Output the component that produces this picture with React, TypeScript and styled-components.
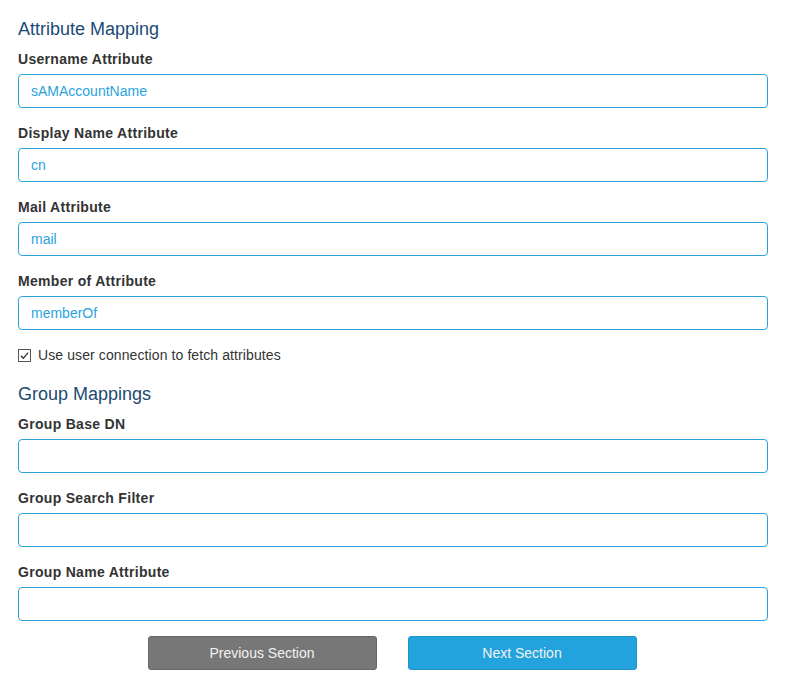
import React from 'react';
import styled, { createGlobalStyle } from 'styled-components';

const GlobalStyle = createGlobalStyle`
  body {
    margin: 0;
    background: #ffffff;
    font-family: "Liberation Sans", Arial, sans-serif;
  }
`;

const Page = styled.div`
  padding: 17px 18px 19px;
  display: flex;
  flex-direction: column;
`;

const SectionTitle = styled.h2`
  margin: 0 0 9px;
  font-size: 18px;
  line-height: 24px;
  font-weight: 400;
  color: #1b4b74;
`;

const Field = styled.div`
  display: flex;
  flex-direction: column;
  margin-bottom: 16px;

  &:last-of-type {
    margin-bottom: 0;
  }
`;

const Label = styled.label`
  font-size: 14px;
  line-height: 18px;
  font-weight: 700;
  letter-spacing: 0.3px;
  color: #333333;
  margin-bottom: 6px;
`;

const Input = styled.input`
  box-sizing: border-box;
  width: 100%;
  height: 34px;
  padding: 0 12px;
  border: 1px solid #2aa3dc;
  border-radius: 4px;
  font-family: inherit;
  font-size: 14px;
  color: #2aa3dc;
  background: #ffffff;
  outline: none;
`;

const CheckRow = styled.label`
  display: flex;
  align-items: center;
  gap: 7px;
  height: 18px;
  margin: 16px 0 18px;
  font-size: 14px;
  letter-spacing: 0.1px;
  color: #333333;
`;

const Box = styled.span`
  box-sizing: border-box;
  width: 13px;
  height: 13px;
  border: 1px solid #555555;
  background: #ffffff;
  display: flex;
  align-items: center;
  justify-content: center;

  svg {
    width: 9px;
    height: 9px;
  }
`;

const Group = styled.div`
  display: flex;
  flex-direction: column;
`;

const Actions = styled.div`
  display: flex;
  justify-content: center;
  gap: 31px;
  margin-top: 15px;
  padding-right: 2px;
`;

const Button = styled.button<{ $primary?: boolean }>`
  width: 229px;
  height: 34px;
  border-radius: 3px;
  border: 1px solid ${(p) => (p.$primary ? '#1f95cb' : '#666666')};
  background: ${(p) => (p.$primary ? '#23a3dd' : '#777777')};
  color: #f2f2f2;
  font-family: inherit;
  font-size: 14px;
  cursor: pointer;
`;

const attributeFields = [
  { label: 'Username Attribute', value: 'sAMAccountName' },
  { label: 'Display Name Attribute', value: 'cn' },
  { label: 'Mail Attribute', value: 'mail' },
  { label: 'Member of Attribute', value: 'memberOf' },
];

const groupFields = ['Group Base DN', 'Group Search Filter', 'Group Name Attribute'];

export default function App() {
  return (
    <Page>
      <GlobalStyle />
      <SectionTitle>Attribute Mapping</SectionTitle>
      <Group>
        {attributeFields.map((f) => (
          <Field key={f.label}>
            <Label>{f.label}</Label>
            <Input defaultValue={f.value} />
          </Field>
        ))}
      </Group>
      <CheckRow>
        <Box>
          <svg viewBox="0 0 10 10">
            <path d="M1 5.2 L3.8 8 L9 1.8" fill="none" stroke="#333" strokeWidth="1.4" />
          </svg>
        </Box>
        Use user connection to fetch attributes
      </CheckRow>
      <SectionTitle>Group Mappings</SectionTitle>
      <Group>
        {groupFields.map((label) => (
          <Field key={label}>
            <Label>{label}</Label>
            <Input />
          </Field>
        ))}
      </Group>
      <Actions>
        <Button>Previous Section</Button>
        <Button $primary>Next Section</Button>
      </Actions>
    </Page>
  );
}
